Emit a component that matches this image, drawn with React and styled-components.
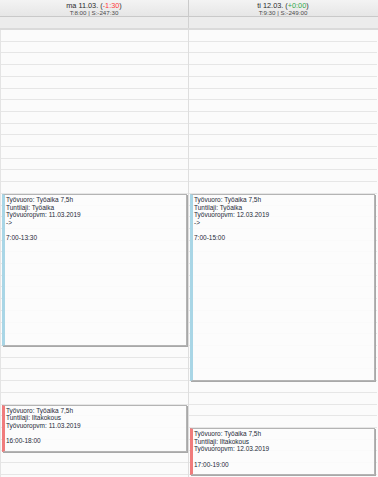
import React from "react";
import styled, { createGlobalStyle } from "styled-components";

const SLOT = 11.71;

const Global = createGlobalStyle`
  html, body { margin: 0; padding: 0; overflow: hidden; background: #fbfbfb; }
  body { font-family: "Liberation Sans", Arial, sans-serif; }
`;

const Page = styled.div`
  width: 378px;
  height: 477px;
  overflow: hidden;
  display: flex;
  flex-direction: column;
`;

const HeaderRow = styled.div`
  display: flex;
  height: 17px;
  box-sizing: border-box;
  border-bottom: 1px solid #c9c9c9;
  background: linear-gradient(#f3f3f3, #e6e6e6);
`;

const HeaderCell = styled.div`
  width: ${(p) => p.$w}px;
  box-sizing: border-box;
  border-right: 1px solid ${(p) => (p.$last ? "transparent" : "#cacaca")};
  display: flex;
  flex-direction: column;
  align-items: center;
  padding-top: 2px;
  color: #2a2a2a;
`;

const DayTitle = styled.div`
  font-size: 7.3px;
  line-height: 8px;
  white-space: nowrap;
`;

const Diff = styled.span`
  color: ${(p) => (p.$neg ? "#ff3b3b" : "#2fa84a")};
`;

const DaySub = styled.div`
  font-size: 6.2px;
  line-height: 6px;
  color: #4a4a4a;
  white-space: nowrap;
`;

const AllDayRow = styled.div`
  display: flex;
  height: 13px;
  box-sizing: border-box;
  border-bottom: 2px solid #dadada;
  background: #ececec;
`;

const AllDayCell = styled.div`
  width: ${(p) => p.$w}px;
  box-sizing: border-box;
  border-right: 1px solid ${(p) => (p.$last ? "transparent" : "#d2d2d2")};
`;

const Body = styled.div`
  display: flex;
  flex: 1;
  min-height: 0;
`;

const DayColumn = styled.div`
  position: relative;
  width: ${(p) => p.$w}px;
  box-sizing: border-box;
  border-right: 1px solid ${(p) => (p.$last ? "transparent" : "#dedede")};
  border-left: ${(p) => (p.$first ? "1px solid #e4e4e4" : "none")};
  display: grid;
  grid-template-rows: repeat(48, ${SLOT}px);
  align-content: start;
`;

const Slot = styled.div`
  box-sizing: border-box;
  border-bottom: 1px solid #e6e6e6;
  background: #fbfbfb;
`;

const Event = styled.div`
  position: absolute;
  left: 1px;
  right: ${(p) => p.$right}px;
  box-sizing: border-box;
  border: 1px solid #b4b4b4;
  border-left: 3px solid ${(p) => (p.$kind === "red" ? "#f07c7c" : "#a9d6e6")};
  box-shadow: 1px 1px 0 #a8a8a8;
  background: rgba(252, 252, 252, 0.92);
  padding: 1px 2px 0 1px;
  color: #1c2a38;
  font-size: 6.5px;
  line-height: 7.6px;
  overflow: hidden;
`;

const Line = styled.div`
  white-space: nowrap;
  min-height: 7.6px;
`;

const days = [
  {
    w: 189,
    title: "ma 11.03.",
    diff: "-1:30",
    neg: true,
    sub: "T:8:00 | S:-247:30",
    events: [
      {
        start: 7,
        end: 13.5,
        kind: "blue",
        lines: ["Työvuoro: Työaika 7,5h", "Tuntilaji: Työaika", "Työvuoropvm: 11.03.2019", "->", "", "7:00-13:30"],
      },
      {
        start: 16,
        end: 18,
        kind: "red",
        lines: ["Työvuoro: Työaika 7,5h", "Tuntilaji: Iltakokous", "Työvuoropvm: 11.03.2019", "", "16:00-18:00"],
      },
    ],
  },
  {
    w: 189,
    title: "ti 12.03.",
    diff: "+0:00",
    neg: false,
    sub: "T:9:30 | S:-249:00",
    events: [
      {
        start: 7,
        end: 15,
        kind: "blue",
        lines: ["Työvuoro: Työaika 7,5h", "Tuntilaji: Työaika", "Työvuoropvm: 12.03.2019", "->", "", "7:00-15:00"],
      },
      {
        start: 17,
        end: 19,
        kind: "red",
        lines: ["Työvuoro: Työaika 7,5h", "Tuntilaji: Iltakokous", "Työvuoropvm: 12.03.2019", "", "17:00-19:00"],
      },
    ],
  },
];

export default function App() {
  return (
    <Page>
      <Global />
      <HeaderRow>
        {days.map((d, i) => (
          <HeaderCell key={i} $w={d.w} $last={i === days.length - 1}>
            <DayTitle>
              {d.title} (<Diff $neg={d.neg}>{d.diff}</Diff>)
            </DayTitle>
            <DaySub>{d.sub}</DaySub>
          </HeaderCell>
        ))}
      </HeaderRow>
      <AllDayRow>
        {days.map((d, i) => (
          <AllDayCell key={i} $w={d.w} $last={i === days.length - 1} />
        ))}
      </AllDayRow>
      <Body>
        {days.map((d, i) => (
          <DayColumn key={i} $w={d.w} $first={i === 0} $last={i === days.length - 1}>
            {Array.from({ length: 48 }).map((_, s) => (
              <Slot key={s} />
            ))}
            {d.events.map((e, j) => (
              <Event
                key={j}
                $kind={e.kind}
                $right={i === 0 ? 1 : 2}
                style={{
                  top: `${e.start * 2 * SLOT}px`,
                  height: `${(e.end - e.start) * 2 * SLOT}px`,
                }}
              >
                {e.lines.map((l, k) => (
                  <Line key={k}>{l}</Line>
                ))}
              </Event>
            ))}
          </DayColumn>
        ))}
      </Body>
    </Page>
  );
}
